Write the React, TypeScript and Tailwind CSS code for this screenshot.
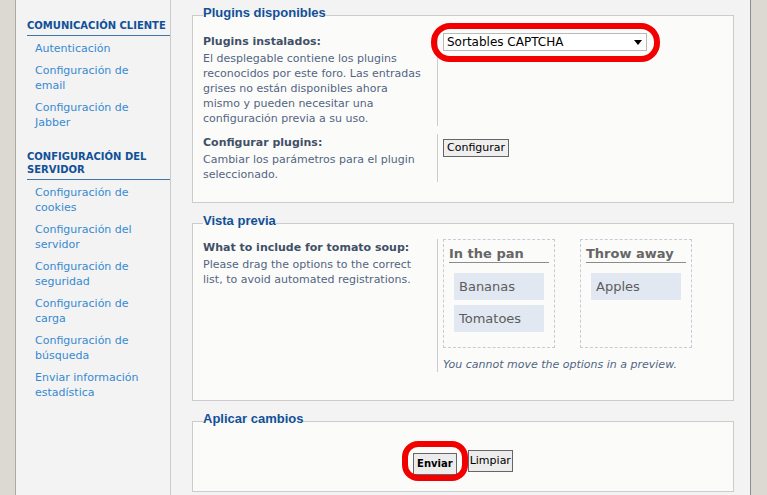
import React from "react"

const sections = [
  {
    title: ["COMUNICACIÓN CLIENTE"],
    items: [["Autenticación"], ["Configuración de", "email"], ["Configuración de", "Jabber"]],
  },
  {
    title: ["CONFIGURACIÓN DEL", "SERVIDOR"],
    items: [
      ["Configuración de", "cookies"],
      ["Configuración del", "servidor"],
      ["Configuración de", "seguridad"],
      ["Configuración de", "carga"],
      ["Configuración de", "búsqueda"],
      ["Enviar información", "estadística"],
    ],
  },
]

function Lines({ lines }: { lines: string[] }) {
  return (
    <>
      {lines.map((l, i) => (
        <span key={i} className="block">
          {l}
        </span>
      ))}
    </>
  )
}

function Sidebar() {
  return (
    <aside className="w-[155px] shrink-0 border-r border-[#cccccc] pt-[19px]">
      {sections.map((s, i) => (
        <div key={i} className={i > 0 ? "mt-[20px]" : ""}>
          <p className="ml-[11px] border-b border-[#3f74ad] pb-[3px] text-[10px] font-bold leading-[13px] text-[#115098]">
            <Lines lines={s.title} />
          </p>
          <ul className="ml-[19px] mt-[5px] flex flex-col gap-[7px]">
            {s.items.map((it, j) => (
              <li key={j} className="text-[11px] leading-[15px] text-[#368ad2]">
                <Lines lines={it} />
              </li>
            ))}
          </ul>
        </div>
      ))}
    </aside>
  )
}

function Fieldset({ legend, className, children }: { legend: string; className: string; children: React.ReactNode }) {
  return (
    <fieldset className={"w-[542px] min-w-0 border border-[#cccccc] bg-[#fbfcfa] px-[10px] " + className}>
      <legend
        className="pb-[5px] text-[13px] font-bold leading-[16px] text-[#115098]"
        style={{ fontFamily: '"Liberation Sans", Arial, sans-serif' }}
      >
        {legend}
      </legend>
      {children}
    </fieldset>
  )
}

function Row({ label, desc, children, className = "" }: { label: string; desc: string[]; children: React.ReactNode; className?: string }) {
  return (
    <div className={"flex " + className}>
      <div className="w-[234px] shrink-0">
        <p className="text-[11px] font-bold leading-[18px] text-[#425067]">{label}</p>
        <p className="text-[11px] leading-[15px] text-[#536482]">
          <Lines lines={desc} />
        </p>
      </div>
      <div className="flex-1 border-l border-[#cccccc] pl-[5px]">{children}</div>
    </div>
  )
}

function SortBox({ title, items }: { title: string; items: string[] }) {
  return (
    <div className="h-[109px] w-[112px] border border-dashed border-[#c8c9d9] px-[5px]">
      <p className="mt-[6px] border-b border-[#8c8c8c] text-[13px] font-bold leading-[16px] text-[#666666]">{title}</p>
      <ul className="mt-[10px] flex flex-col gap-[5px] pl-[5px]">
        {items.map(it => (
          <li key={it} className="h-[27px] w-[90px] bg-[#e1e8f2] pl-[5px] text-[13px] leading-[27px] text-[#5c5c5c]">
            {it}
          </li>
        ))}
      </ul>
    </div>
  )
}

export default function App() {
  return (
    <div
      className="flex h-[495px] w-[767px] overflow-hidden bg-[#f3f3f3]"
      style={{ fontFamily: '"DejaVu Sans", Verdana, sans-serif' }}
    >
      <div className="w-[16px] shrink-0 border-r border-[#a9a9a9] bg-[#dcd9d2]" />
      <Sidebar />
      <main className="flex-1 pl-[21px] pt-[5px]">
        <Fieldset legend="Plugins disponibles" className="pt-[7px] pb-[20px]">
          <Row
            label="Plugins instalados:"
            desc={[
              "El desplegable contiene los plugins",
              "reconocidos por este foro. Las entradas",
              "grises no están disponibles ahora",
              "mismo y pueden necesitar una",
              "configuración previa a su uso.",
            ]}
          >
            <div className="relative w-[204px]">
              <div className="flex h-[18px] items-center justify-between border border-[#b9b9b9] bg-white pl-[3px] pr-[4px] text-[12px] text-black">
                <span>Sortables CAPTCHA</span>
                <svg width="8" height="5" viewBox="0 0 8 5">
                  <path d="M0 0h8L4 5z" fill="#000" />
                </svg>
              </div>
              <div className="absolute left-[-12px] top-[-10px] h-[39px] w-[229px] rounded-[19px] border-[6px] border-[#f20000]" />
            </div>
          </Row>
          <Row
            className="mt-[8px]"
            label="Configurar plugins:"
            desc={["Cambiar los parámetros para el plugin", "seleccionado."]}
          >
            <button className="h-[18px] border border-[#666666] bg-[#efefef] px-[3px] text-[11px] leading-[16px] text-black">
              Configurar
            </button>
          </Row>
        </Fieldset>

        <Fieldset legend="Vista previa" className="mt-[10px] pt-[5px] pb-[28px]">
          <Row
            label="What to include for tomato soup:"
            desc={["Please drag the options to the correct", "list, to avoid automated registrations."]}
          >
            <div className="flex gap-[25px]">
              <SortBox title="In the pan" items={["Bananas", "Tomatoes"]} />
              <SortBox title="Throw away" items={["Apples"]} />
            </div>
            <p className="mt-[9px] text-[11px] italic leading-[15px] text-[#536482]">
              You cannot move the options in a preview.
            </p>
          </Row>
        </Fieldset>

        <Fieldset legend="Aplicar cambios" className="mt-[10px] pt-[18px] pb-[16px]">
          <div className="flex justify-center gap-[11px]">
            <div className="relative">
              <button className="h-[22px] border border-[#666666] bg-[#ececec] px-[3px] text-[10px] font-bold text-black">
                Enviar
              </button>
              <div className="absolute left-[-11px] top-[-9px] h-[40px] w-[66px] rounded-[16px] border-[6px] border-[#f20000]" />
            </div>
            <button className="h-[22px] border border-[#666666] bg-[#ececec] px-[1px] text-[11px] text-black">
              Limpiar
            </button>
          </div>
        </Fieldset>
      </main>
      <div className="w-[17px] shrink-0 border-l border-[#8e8d95] bg-[#dcd9d2]" />
    </div>
  )
}
